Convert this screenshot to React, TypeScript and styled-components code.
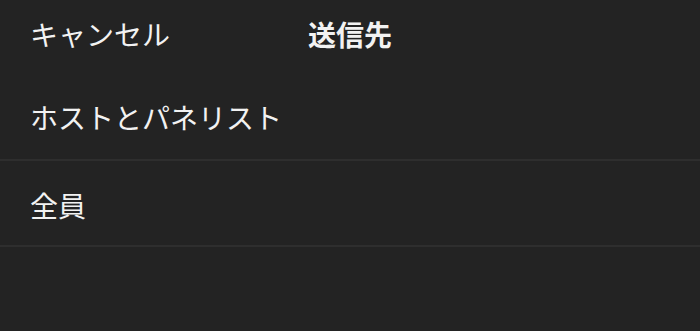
import React from 'react';
import styled, { createGlobalStyle } from 'styled-components';

const GlobalStyle = createGlobalStyle`
  html, body {
    margin: 0;
    padding: 0;
    background: #232323;
  }
  body {
    font-family: 'Noto Sans CJK JP', 'Noto Sans', sans-serif;
    -webkit-font-smoothing: antialiased;
  }
`;

const Screen = styled.div`
  width: 700px;
  height: 331px;
  background: #232323;
  color: #f2f2f2;
  overflow: hidden;
`;

const Header = styled.div`
  position: relative;
  display: flex;
  align-items: center;
  height: 68px;
  padding: 0 30px;
`;

const CancelButton = styled.button`
  background: none;
  border: none;
  padding: 0;
  color: #f2f2f2;
  font-family: inherit;
  font-size: 28px;
  line-height: 1;
  cursor: pointer;
`;

const Title = styled.div`
  position: absolute;
  left: 0;
  right: 0;
  text-align: center;
  font-size: 28px;
  font-weight: 700;
  line-height: 1;
  pointer-events: none;
`;

const List = styled.ul`
  list-style: none;
  margin: 0;
  padding: 0;
`;

const Row = styled.li<{ $height: number; $offset: number }>`
  display: flex;
  align-items: center;
  height: ${(props) => props.$height}px;
  padding: ${(props) => props.$offset}px 30px 0;
  border-bottom: 2px solid #2e2e2e;
  font-size: 28px;
  line-height: 1;
  box-sizing: border-box;
`;

const App = () => {
  return (
    <Screen>
      <GlobalStyle />
      <Header>
        <CancelButton>キャンセル</CancelButton>
        <Title>送信先</Title>
      </Header>
      <List>
        <Row $height={93} $offset={6}>
          ホストとパネリスト
        </Row>
        <Row $height={86} $offset={4}>
          全員
        </Row>
      </List>
    </Screen>
  );
};

export default App;
